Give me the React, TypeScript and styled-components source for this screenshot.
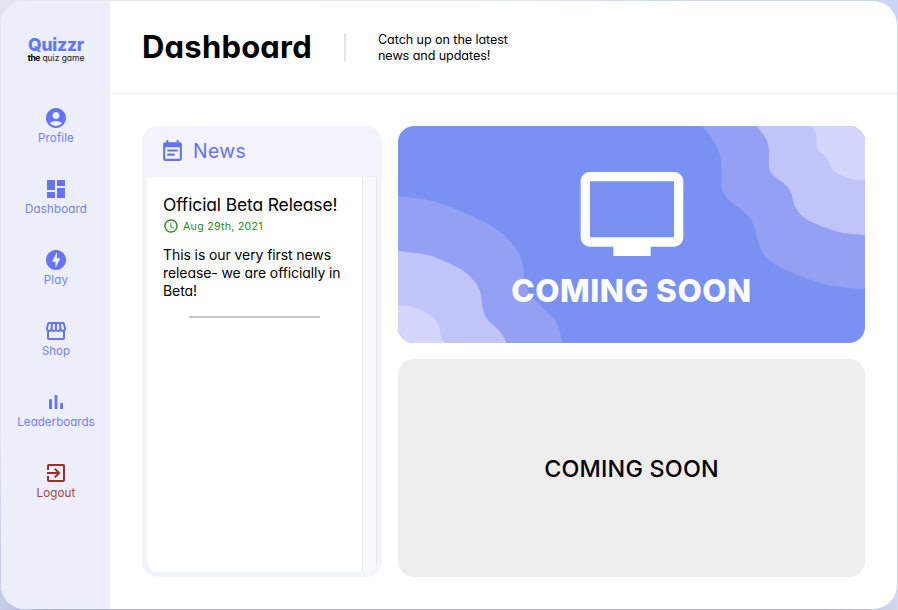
import React from "react";
import styled, { createGlobalStyle } from "styled-components";
import {
  MdAccessTime,
  MdAccountCircle,
  MdDashboard,
  MdEventNote,
  MdExitToApp,
  MdOfflineBolt,
  MdOutlineStorefront,
  MdTv,
} from "react-icons/md";

const GlobalStyle = createGlobalStyle`
  * { box-sizing: border-box; }
  body {
    margin: 0;
    font-family: Inter, "Open Sans", sans-serif;
    font-feature-settings: "cv11" 1;
    color: #000;
  }
  p, h1, h2, h3 { margin: 0; font-weight: 400; }
`;

const Backdrop = styled.div`
  width: 898px;
  height: 610px;
  padding: 1px;
  background:
    linear-gradient(90deg, #c6cdea, #b0b4cd 6%, #b0b4cd 92%, #d2d8ee) bottom / 100% 24px no-repeat,
    linear-gradient(180deg, transparent 70%, #c5cfee 90%),
    linear-gradient(90deg, #e2e5f1, #e6e8f3 50%, #cad5f8 80%);
`;

const Window = styled.div`
  display: flex;
  height: 608px;
  border-radius: 24px;
  overflow: hidden;
  background: #fff;
`;

const Sidebar = styled.nav`
  flex: 0 0 109px;
  display: flex;
  flex-direction: column;
  align-items: center;
  padding-left: 1px;
  background: #eceefa;
`;

const Brand = styled.div`
  height: 105px;
  padding-top: 34px;
  text-align: center;
`;

const BrandName = styled.div`
  font-size: 17.4px;
  line-height: 19px;
  font-weight: 800;
  letter-spacing: -0.2px;
  color: #6277f2;
`;

const Tagline = styled.div`
  font-size: 8.5px;
  line-height: 10px;
  letter-spacing: -0.03px;
  color: #222;
  white-space: nowrap;
  margin-top: -1px;

  b {
    font-weight: 700;
    letter-spacing: -0.35px;
    color: #000;
  }
`;

const NavItem = styled.a<{ $danger?: boolean; $spacing: number }>`
  height: 71px;
  display: flex;
  flex-direction: column;
  align-items: center;
  color: ${(p) => (p.$danger ? "#a52a22" : "#6474f2")};
  font-size: 11.6px;
  line-height: 16px;
  letter-spacing: ${(p) => p.$spacing}px;

  span { opacity: 0.88; }
`;

const Main = styled.main`
  flex: 1;
  display: flex;
  flex-direction: column;
`;

const Header = styled.header`
  height: 93px;
  display: flex;
  align-items: center;
  padding-left: 32px;
  border-bottom: 1px solid #ededf6;
`;

const Title = styled.h1`
  width: 202px;
  font-size: 31px;
  line-height: 40px;
  font-weight: 700;
  letter-spacing: 0.2px;
`;

const Divider = styled.div`
  width: 2px;
  height: 28px;
  margin-right: 32px;
  background: #e4e4f8;
`;

const Subtitle = styled.p`
  font-size: 12.6px;
  line-height: 16px;
  width: 150px;
  padding-top: 1px;
  letter-spacing: -0.08px;
`;

const Content = styled.div`
  flex: 1;
  display: grid;
  grid-template-columns: 240px 467px;
  grid-template-rows: 217px 218px;
  gap: 16px;
  padding: 32px;
`;

const NewsCard = styled.section`
  grid-row: span 2;
  display: flex;
  flex-direction: column;
  padding: 0 5px 5px;
  border-radius: 16px;
  background: #f2f3fc;
`;

const NewsHeader = styled.div`
  height: 51px;
  display: flex;
  align-items: center;
  gap: 8px;
  padding: 0 0 1px 13px;
  color: #6474f2;
  font-size: 19.4px;
  letter-spacing: 0.35px;
`;

const NewsPane = styled.div`
  flex: 1;
  display: flex;
  overflow: hidden;
  border-radius: 0 0 11px 11px;
  background: #fff;
`;

const NewsList = styled.div`
  flex: 1;
  padding: 18px 16px;
`;

const ScrollTrack = styled.div`
  width: 15px;
  background: #f9f9f9;
  border: solid #e6e6e8;
  border-width: 0 1px;
`;

const PostTitle = styled.h3`
  font-size: 17.4px;
  line-height: 20px;
  letter-spacing: -0.1px;
  white-space: nowrap;
`;

const PostDate = styled.div`
  display: flex;
  align-items: center;
  gap: 4.5px;
  height: 16px;
  margin: 3px 0 12px -0.5px;
  color: #2b8a20;
  font-size: 10.7px;
  letter-spacing: 0.23px;
`;

const PostBody = styled.p`
  font-size: 14px;
  line-height: 18px;
  letter-spacing: -0.09px;
  white-space: nowrap;
`;

const Rule = styled.div`
  width: 131px;
  height: 2px;
  margin: 16px 0 0 26px;
  background: #c8c8c8;
`;

const Feature = styled.section`
  display: grid;
  border-radius: 16px;
  overflow: hidden;
  background: #7991f3;

  > * { grid-area: 1 / 1; }
`;

const FeatureBody = styled.div`
  display: flex;
  flex-direction: column;
  align-items: center;
  padding-top: 32px;
  color: #fff;
`;

const FeatureTitle = styled.h2`
  font-size: 31.5px;
  line-height: 40px;
  margin-top: 1px;
  font-weight: 800;
  letter-spacing: 0.52px;
  white-space: nowrap;
`;

const Placeholder = styled.section`
  display: flex;
  align-items: center;
  justify-content: center;
  border-radius: 16px;
  background: #ededed;
  font-size: 23.3px;
  font-weight: 450;
  letter-spacing: 0.22px;
`;

type Point = [number, number];

/* Smooth curve through the points, closed by the given card corner. */
function blob(points: Point[], corner: Point): string {
  let d = `M${points[0]}`;
  for (let i = 0; i < points.length - 1; i++) {
    const p0 = points[Math.max(i - 1, 0)];
    const p1 = points[i];
    const p2 = points[i + 1];
    const p3 = points[Math.min(i + 2, points.length - 1)];
    d += `C${p1[0] + (p2[0] - p0[0]) / 6},${p1[1] + (p2[1] - p0[1]) / 6} ${
      p2[0] - (p3[0] - p1[0]) / 6
    },${p2[1] - (p3[1] - p1[1]) / 6} ${p2}`;
  }
  return `${d}L${corner}Z`;
}

const BOTTOM_LEFT: Point = [0, 218];
const TOP_RIGHT: Point = [467, 0];

const waves: { fill: string; corner: Point; points: Point[] }[] = [
  { fill: "#93a0f4", corner: BOTTOM_LEFT, points: [[0, 70.3], [27, 73.3], [47, 79], [70, 88.5], [94, 100.5], [110, 113], [121, 128], [125, 141], [126.5, 154], [131, 167], [144, 181], [157, 195], [162, 206], [163.7, 218]] },
  { fill: "#c0c4f9", corner: BOTTOM_LEFT, points: [[0, 124.7], [30, 129], [47, 135.5], [64, 144], [77, 156], [82.5, 167], [85, 184], [90, 194], [99, 202.5], [106, 211.5], [108.5, 218]] },
  { fill: "#d4d6fc", corner: BOTTOM_LEFT, points: [[0, 179], [14, 181], [27, 186], [37, 193], [41.5, 202], [43, 211], [48, 218]] },
  { fill: "#93a0f4", corner: TOP_RIGHT, points: [[304.3, 0], [315, 14], [322, 29], [323.3, 44], [323.7, 61], [329, 72], [342, 83], [352.7, 93], [357, 104], [361, 118], [367, 130], [379, 139.5], [405, 151], [432, 159.5], [467, 163.3]] },
  { fill: "#c0c4f9", corner: TOP_RIGHT, points: [[358.7, 0], [367, 11], [370.7, 22], [371, 40.7], [374.5, 48.5], [388.7, 60], [393.7, 69], [397, 80], [403.7, 89.5], [415.3, 96.7], [442, 106.3], [467, 109.3]] },
  { fill: "#d4d6fc", corner: TOP_RIGHT, points: [[413, 0], [418, 8], [419.3, 23], [427, 30], [431, 36], [434, 43.3], [442, 48.7], [453.7, 53], [467, 54.3]] },
];

const Bars = () => (
  <svg width="24" height="24" viewBox="0 0 24 24" fill="currentColor">
    <path d="M5 9.2h3V19H5zM10.6 5h2.8v14h-2.8zm5.6 8H19v6h-2.8z" />
  </svg>
);

const links = [
  { label: "Profile", icon: <MdAccountCircle size={24} />, spacing: 0.08 },
  { label: "Dashboard", icon: <MdDashboard size={24} />, spacing: 0.12 },
  { label: "Play", icon: <MdOfflineBolt size={24} />, spacing: 0.2 },
  { label: "Shop", icon: <MdOutlineStorefront size={24} />, spacing: 0 },
  { label: "Leaderboards", icon: <Bars />, spacing: 0 },
  { label: "Logout", icon: <MdExitToApp size={24} />, spacing: 0.15, danger: true },
];

export default function App() {
  return (
    <Backdrop>
      <GlobalStyle />
      <Window>
        <Sidebar>
          <Brand>
            <BrandName>Quizzr</BrandName>
            <Tagline>
              <b>the</b> quiz game
            </Tagline>
          </Brand>
          {links.map((l) => (
            <NavItem key={l.label} $danger={l.danger} $spacing={l.spacing}>
              {l.icon}
              <span>{l.label}</span>
            </NavItem>
          ))}
        </Sidebar>
        <Main>
          <Header>
            <Title>Dashboard</Title>
            <Divider />
            <Subtitle>
              Catch up on the latest
              <br />
              news and updates!
            </Subtitle>
          </Header>
          <Content>
            <NewsCard>
              <NewsHeader>
                <MdEventNote size={25} />
                News
              </NewsHeader>
              <NewsPane>
                <NewsList>
                  <PostTitle>Official Beta Release!</PostTitle>
                  <PostDate>
                    <MdAccessTime size={16} />
                    Aug 29th, 2021
                  </PostDate>
                  <PostBody>
                    This is our very first news
                    <br />
                    release- we are officially in
                    <br />
                    Beta!
                  </PostBody>
                  <Rule />
                </NewsList>
                <ScrollTrack />
              </NewsPane>
            </NewsCard>
            <Feature>
              <svg width="467" height="218" viewBox="0 0 467 218">
                {waves.map((w, i) => (
                  <path key={i} fill={w.fill} d={blob(w.points, w.corner)} />
                ))}
              </svg>
              <FeatureBody>
                <MdTv size={112} />
                <FeatureTitle>COMING SOON</FeatureTitle>
              </FeatureBody>
            </Feature>
            <Placeholder>COMING SOON</Placeholder>
          </Content>
        </Main>
      </Window>
    </Backdrop>
  );
}
